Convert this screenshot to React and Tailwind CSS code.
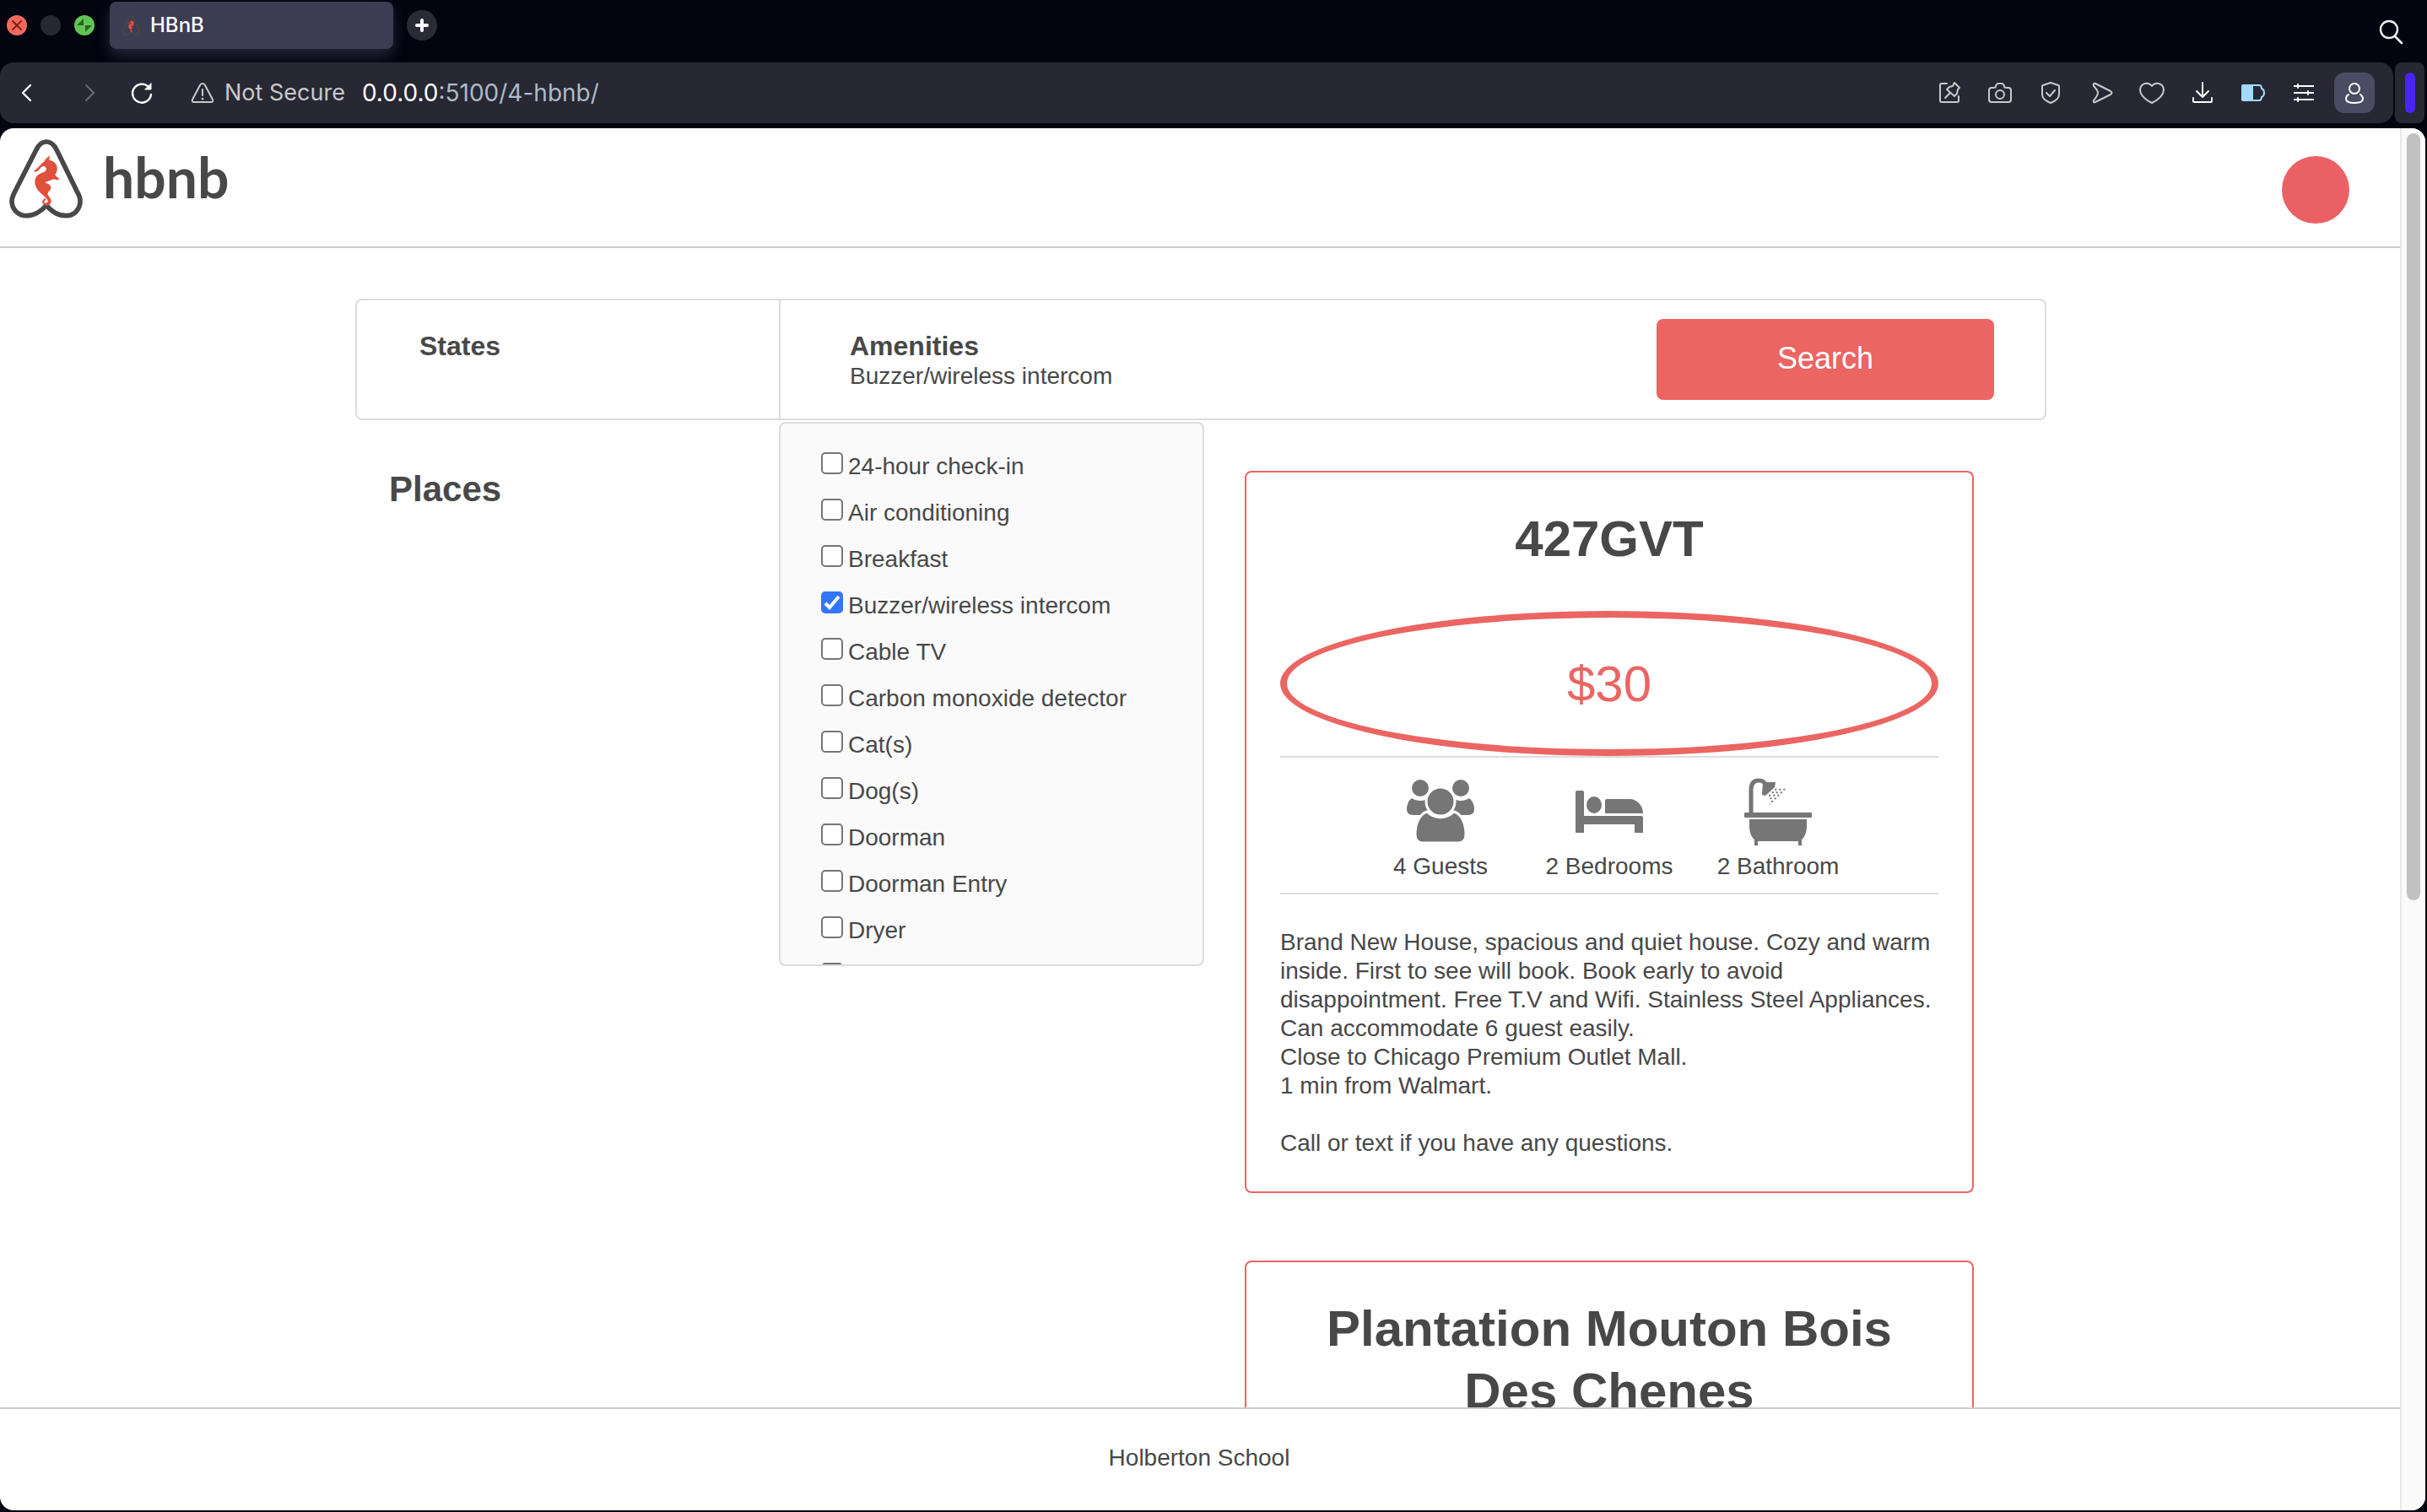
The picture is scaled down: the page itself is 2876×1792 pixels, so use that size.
import { useState } from "react";

const amenities = [
  "24-hour check-in",
  "Air conditioning",
  "Breakfast",
  "Buzzer/wireless intercom",
  "Cable TV",
  "Carbon monoxide detector",
  "Cat(s)",
  "Dog(s)",
  "Doorman",
  "Doorman Entry",
  "Dryer",
  "Elevator in building",
];

function Stroke({ children, className = "text-[#c9c9cb]", size = "size-8" }) {
  return (
    <svg
      viewBox="0 0 32 32"
      className={`${size} ${className}`}
      fill="none"
      stroke="currentColor"
      strokeWidth="2"
      strokeLinecap="round"
      strokeLinejoin="round"
      aria-hidden="true"
    >
      {children}
    </svg>
  );
}

function Seahorse() {
  return (
    <path
      fill="#e0513c"
      d="M177 79 L175 95 C184 97 198 102 202 116 C205 128 202 140 196 147 C199 153 204 157 210 160 L206 167 C198 164 190 162 185 165 C179 169 168 170 160 175 C168 180 178 181 181 191 C182 199 177 204 172 208 L169 217 C174 226 182 232 182 243 C181 252 172 258 162 256 C154 255 149 249 151 241 C152 236 156 232 162 231 L163 237 C158 239 156 244 159 248 C163 251 169 248 170 242 C170 234 160 228 152 219 C138 207 124 194 124 172 C124 154 137 143 156 138 C167 134 167 122 158 118 C150 115 144 123 139 130 C135 136 130 134 124 138 L121 132 C131 128 138 118 145 111 C150 105 157 102 159 97 C163 89 171 86 177 79 Z"
    />
  );
}

function LogoMark({ className }) {
  return (
    <svg viewBox="0 0 318 318" className={className} aria-hidden="true">
      <path
        d="M165 256 C148 277 121 293 95 293 C62 293 42 268 42 241 C42 230 47 220 52 209 L128 60 C137 41 148 30 165 30 C182 30 193 41 202 60 L275 209 C281 220 285 230 285 241 C285 268 266 293 235 293 C208 293 182 277 165 256 Z"
        fill="none"
        stroke="#484848"
        strokeWidth="17"
        strokeLinejoin="round"
      />
      <Seahorse />
    </svg>
  );
}

function GuestsIcon() {
  return (
    <svg viewBox="0 0 80 80" className="size-20" fill="#767676" aria-hidden="true">
      <path d="M6 24 C10 27 17 28 22 26 L27 44 H8 C2 44 0 41 0 37 C0 32 2 27 6 24 Z" />
      <path d="M74 24 C70 27 63 28 58 26 L53 44 H72 C78 44 80 41 80 37 C80 32 78 27 74 24 Z" />
      <ellipse cx="16" cy="12" rx="10" ry="10" />
      <ellipse cx="64" cy="12" rx="10" ry="10" />
      <path
        stroke="#fff"
        strokeWidth="3"
        d="M24 40 C33 49 47 49 56 40 C66 43 70 56 70 67 C70 73 67 77 61 77 H19 C13 77 10 73 10 67 C10 56 14 43 24 40 Z"
      />
      <circle cx="40" cy="28" r="17" stroke="#fff" strokeWidth="3" />
    </svg>
  );
}

function BedIcon() {
  return (
    <svg viewBox="0 0 80 80" className="size-20" fill="#767676" aria-hidden="true">
      <path d="M0 17 Q0 15 2 15 H8 Q10 15 10 17 V45 H78 Q80 45 80 47 V65 H70 V55 H10 V65 H0 Z" />
      <ellipse cx="22" cy="32" rx="9" ry="10" />
      <path d="M37 25 H64 C73 25 80 33 80 42 H35 V27 Q35 25 37 25 Z" />
    </svg>
  );
}

function BathIcon() {
  return (
    <svg viewBox="0 0 80 80" className="size-20" fill="#767676" aria-hidden="true">
      <rect x="0" y="41" width="80" height="6" rx="1" />
      <path d="M6 49 H74 V57 C74 65 71 71 68 73 V80 H64 V75 H16 V80 H12 V73 C9 71 6 65 6 57 Z" />
      <path d="M8 41 V14 C8 7 11 3 17 3 C21 3 24 5 25 8" fill="none" stroke="#767676" strokeWidth="5" />
      <path d="M22 5 L37 5 L36 11 L25 21 L21 20 Z" />
      <g stroke="#767676" strokeWidth="2" strokeDasharray="2 3">
        <path d="M38 13 L28 23" />
        <path d="M43 13 L29 27" />
        <path d="M48 13 L30 31" />
      </g>
    </svg>
  );
}

function TabBar() {
  return (
    <div className="flex h-[74px] shrink-0 items-start pl-2 pr-[26px] font-['Inter',sans-serif]">
      <div className="flex h-[60px] items-center gap-4">
        <button aria-label="Close window" className="size-6">
          <svg viewBox="0 0 24 24" className="size-6">
            <circle cx="12" cy="12" r="12" fill="#ee6a5f" />
            <path d="M7 7 L17 17 M17 7 L7 17" stroke="#8c1a10" strokeWidth="2" strokeLinecap="round" />
          </svg>
        </button>
        <button aria-label="Minimize window" className="size-6 rounded-full bg-[#272833]" />
        <button aria-label="Zoom window" className="size-6">
          <svg viewBox="0 0 24 24" className="size-6">
            <circle cx="12" cy="12" r="12" fill="#61c454" />
            <path d="M11 4 V12 H3 Z M13 20 V12 H21 Z" fill="#28641c" />
          </svg>
        </button>
      </div>
      <div className="ml-[18px] mt-0.5 flex h-14 w-[336px] items-center gap-2.5 rounded-lg bg-[#3c3c52] pl-3 text-[24px] font-medium text-white shadow-[0_8px_16px_#3c3c5299]">
        <LogoMark className="size-[26px]" />
        HBnB
      </div>
      <button
        aria-label="New tab"
        className="ml-4 mt-3 flex size-9 items-center justify-center rounded-full bg-[#2a2b35] text-white"
      >
        <svg viewBox="0 0 18 18" className="size-[18px]">
          <path d="M9 3 V15 M3 9 H15" stroke="currentColor" strokeWidth="4" strokeLinecap="round" />
        </svg>
      </button>
      <button aria-label="Search tabs" className="ml-auto mt-[22px]">
        <Stroke className="text-[#ececf0]">
          <circle cx="13" cy="13" r="10" strokeWidth="2.4" />
          <path d="M20 21 L28 29" strokeWidth="2.6" />
        </Stroke>
      </button>
    </div>
  );
}

const cell = "flex h-12 w-[60px] items-center justify-center";

function AddressBar() {
  return (
    <div className="flex h-[72px] shrink-0 gap-0.5 pr-[3px] font-['Inter',sans-serif]">
      <div className="flex flex-1 items-center rounded-2xl bg-[#272833] pr-4">
        <button aria-label="Back" className="ml-4">
          <Stroke className="text-white">
            <path d="M20 7 L11 16 L20 25" strokeWidth="2.4" />
          </Stroke>
        </button>
        <button aria-label="Forward" className="ml-[42px]">
          <Stroke className="text-[#6a6b75]">
            <path d="M12 7 L21 16 L12 25" />
          </Stroke>
        </button>
        <button aria-label="Reload" className="ml-[30px]">
          <Stroke className="text-white">
            <path d="M27 18 A11 11 0 1 1 24 9" strokeWidth="2.4" />
            <path d="M27 5 V12 H20 Z" fill="currentColor" strokeWidth="1" />
          </Stroke>
        </button>
        <div className="ml-10 flex items-center gap-2.5 text-[27px] leading-9 text-[#c9c9cb]">
          <Stroke>
            <path d="M16 5 Q18 5 19 7 L28 24 Q29 27 26 27 H6 Q3 27 4 24 L13 7 Q14 5 16 5 Z" />
            <path d="M16 12 V19" />
            <path d="M16 23 V23.2" strokeWidth="2.6" />
          </Stroke>
          <span>Not Secure</span>
        </div>
        <p className="ml-5 text-[28px] leading-9 text-[#aebbc9]">
          <span className="text-white">0.0.0.0</span>:5100/4-hbnb/
        </p>
        <div className="ml-auto flex">
          <button aria-label="Pinboard" className={cell}>
            <Stroke>
              <path d="M13 5 H7 Q5 5 5 7 V25 Q5 27 7 27 H25 Q27 27 27 25 V20" />
              <path d="M22 4 L28 10 L26 12 L25 17 L22 20 L13 12 L16 9 L20 8 Z M17 16 L11 22" />
            </Stroke>
          </button>
          <button aria-label="Snapshot" className={cell}>
            <Stroke>
              <path d="M6 10 H9 Q11 10 11 8 Q12 5 14 5 H18 Q20 5 21 8 Q21 10 23 10 H26 Q29 10 29 13 V24 Q29 27 26 27 H6 Q3 27 3 24 V13 Q3 10 6 10 Z" />
              <circle cx="16" cy="18" r="5" />
            </Stroke>
          </button>
          <button aria-label="Tracker blocking" className={cell}>
            <Stroke>
              <path d="M16 4 L25 7 Q26 7 26 8 V18 Q26 24 16 28 Q6 24 6 18 V8 Q6 7 7 7 Z" />
              <path d="M11 16 L15 20 L21 13" />
            </Stroke>
          </button>
          <button aria-label="Send to device" className={cell}>
            <Stroke>
              <path d="M9 5 L27 14 Q30 16 27 18 L9 27 Q6 28 7 25 Q12 19 12 16 Q12 13 7 8 Q6 4 9 5 Z" />
            </Stroke>
          </button>
          <button aria-label="Bookmark" className={cell}>
            <Stroke>
              <path d="M16 8 Q19 4 24 5 Q29 6 30 12 Q30 21 16 28 Q2 21 2 12 Q3 6 8 5 Q13 4 16 8 Z" />
            </Stroke>
          </button>
          <button aria-label="Downloads" className={cell}>
            <Stroke className="text-white">
              <path d="M16 4 V21 M9 14 L16 21 L23 14 M5 22 V26 Q5 27 6 27 H26 Q27 27 27 26 V22" />
            </Stroke>
          </button>
          <button aria-label="Battery saver" className={cell}>
            <Stroke className="text-[#a3d9ff]">
              <path d="M15 7 H4 Q3 7 3 8 V24 Q3 25 4 25 H15 Z" fill="currentColor" />
              <path d="M15 7 H23 Q26 7 26 11 Q29 12 29 16 Q29 20 26 21 Q26 25 23 25 H15" />
            </Stroke>
          </button>
          <button aria-label="Easy setup" className={cell}>
            <Stroke className="text-white">
              <path d="M4 8 H28 M4 16 H28 M4 24 H28" strokeLinecap="butt" />
              <path d="M9 6 V10 M21 14 V18 M9 22 V26" />
            </Stroke>
          </button>
          <div className={cell}>
            <button aria-label="Profile" className="flex size-12 items-center justify-center rounded-xl bg-[#494c62]">
              <Stroke className="text-white">
                <circle cx="16" cy="11" r="6" />
                <path d="M9 18 Q6 20 6 23 Q6 28 16 28 Q26 28 26 23 Q26 20 23 18" />
              </Stroke>
            </button>
          </div>
        </div>
      </div>
      <div className="flex w-[35px] items-center justify-center rounded-lg bg-[#272833]">
        <div className="h-12 w-3 rounded-full bg-[#4a24f5]" />
      </div>
    </div>
  );
}

function SiteHeader() {
  return (
    <header className="flex h-[142px] shrink-0 items-start justify-between border-b-2 border-[#cccccc] pr-[62px]">
      <a href="#home" aria-label="hbnb home" className="flex items-start gap-4 pt-1.5">
        <LogoMark className="size-[106px]" />
        <span className="mt-3 font-['Lato',sans-serif] text-[66px] font-bold leading-[80px]">hbnb</span>
      </a>
      <div className="mt-[33px] size-20 rounded-full bg-[#eb6064]" />
    </header>
  );
}

function AmenityMenu({ checked, toggle }) {
  return (
    <ul className="absolute -left-0.5 top-full mt-1 flex h-[645px] w-[504px] flex-col gap-[19px] overflow-hidden rounded-lg border-2 border-[#dddddd] bg-[#fafafa] pl-12 pt-[33px]">
      {amenities.map((name) => (
        <li key={name} className="h-9 shrink-0">
          <label className="flex gap-1.5 leading-9">
            <span className="relative mt-px size-[26px]">
              <input
                type="checkbox"
                checked={checked.includes(name)}
                onChange={() => toggle(name)}
                className="block size-[26px] appearance-none rounded-[5px] border-2 border-[#767676] bg-white checked:border-[#3375f6] checked:bg-[#3375f6]"
              />
              {checked.includes(name) && (
                <svg viewBox="0 0 26 26" className="pointer-events-none absolute inset-0 size-[26px]" aria-hidden="true">
                  <path d="M5 14 L10 19 L21 6" fill="none" stroke="#fff" strokeWidth="4" />
                </svg>
              )}
            </span>
            {name}
          </label>
        </li>
      ))}
    </ul>
  );
}

function Filters() {
  const [checked, setChecked] = useState(["Buzzer/wireless intercom"]);
  const toggle = (name) =>
    setChecked((list) => (list.includes(name) ? list.filter((n) => n !== name) : [...list, name]));
  return (
    <section className="mx-auto mt-[60px] flex h-36 w-full max-w-[2004px] items-center rounded-lg border-2 border-[#dddddd] bg-white">
      <div className="h-full w-[502px] border-r-2 border-[#dddddd] pl-[74px] pt-9">
        <h3 className="text-[32px] font-bold leading-9">States</h3>
      </div>
      <div className="relative z-10 h-full w-[502px] pl-[82px] pt-9">
        <h3 className="text-[32px] font-bold leading-9">Amenities</h3>
        <h4 className="leading-9">{checked.join(", ")}</h4>
        <AmenityMenu checked={checked} toggle={toggle} />
      </div>
      <button className="ml-auto mr-[60px] h-24 w-[400px] rounded-lg bg-[#eb6563] pb-0.5 text-[36px] text-white">
        Search
      </button>
    </section>
  );
}

function Place({ name, price, guests, bedrooms, bathrooms, children }) {
  return (
    <article className="flex flex-col rounded-lg border-2 border-[#eb6563] px-10 pb-10 pt-[42px]">
      <h2 className="text-center text-[60px] font-bold leading-[74px]">{name}</h2>
      <div className="mt-12 flex h-[172px] items-center justify-center rounded-[50%] border-8 border-[#eb6563] pt-0.5 text-[60px] text-[#eb6563]">
        {price}
      </div>
      <div className="flex justify-center border-y-2 border-[#dddddd] pb-3.5 pt-6 text-center leading-[34px]">
        <div className="flex w-[200px] flex-col items-center gap-2">
          <GuestsIcon />
          {guests}
        </div>
        <div className="flex w-[200px] flex-col items-center gap-2">
          <BedIcon />
          {bedrooms}
        </div>
        <div className="flex w-[200px] flex-col items-center gap-2">
          <BathIcon />
          {bathrooms}
        </div>
      </div>
      <p className="mt-10 leading-[34px]">{children}</p>
    </article>
  );
}

export default function App() {
  return (
    <div className="flex h-screen flex-col overflow-hidden bg-[#020410]">
      <TabBar />
      <AddressBar />
      <div className="mb-0.5 mr-0.5 mt-1.5 flex min-h-0 flex-1 overflow-hidden rounded-2xl bg-white font-['Liberation_Sans',Arial,sans-serif] text-[28px] text-[#484848]">
        <div className="flex min-w-0 flex-1 flex-col">
          <SiteHeader />
          <main className="min-h-0 flex-1 overflow-hidden">
            <Filters />
            <section className="mx-auto mt-14 flex w-full max-w-[2004px] items-start justify-between pl-10 pr-[86px]">
              <h1 className="text-[42px] font-bold leading-[52px]">Places</h1>
              <div className="flex w-[864px] flex-col gap-20 pt-1">
                <Place name="427GVT" price="$30" guests="4 Guests" bedrooms="2 Bedrooms" bathrooms="2 Bathroom">
                  Brand New House, spacious and quiet house. Cozy and warm inside. First to see will book. Book early to
                  avoid disappointment. Free T.V and Wifi. Stainless Steel Appliances. Can accommodate 6 guest easily.
                  <br />
                  Close to Chicago Premium Outlet Mall.
                  <br />
                  1 min from Walmart.
                  <br />
                  <br />
                  Call or text if you have any questions.
                </Place>
                <Place name="Plantation Mouton Bois Des Chenes" />
              </div>
            </section>
          </main>
          <footer className="flex h-[122px] shrink-0 items-center justify-center border-t-2 border-[#cccccc] pb-1 pr-1">
            Holberton School
          </footer>
        </div>
        <div className="relative -ml-0.5 flex w-[30px] shrink-0 justify-center border-l-2 border-[#e8e8e8] bg-[#fafafa] pt-1.5">
          <div className="h-[909px] w-4 rounded-full bg-[#c1c1c1]" />
        </div>
      </div>
    </div>
  );
}
